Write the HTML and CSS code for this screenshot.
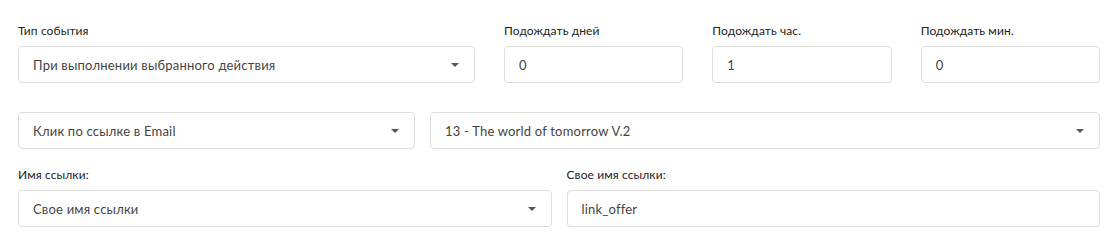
FILE: index.html
```html
<!DOCTYPE html>
<html lang="ru">
<head>
  <meta charset="UTF-8" />
  <title>Тип события</title>
  <link rel="stylesheet" href="styles.css">
</head>
<body>
  <div class="form">
    <div class="row row-top">
      <div class="field">
        <label>Тип события</label>
        <div class="select">
          <span>При выполнении выбранного действия</span>
          <svg class="caret" width="8" height="4" viewBox="0 0 8 4"><path d="M0 0h8L4 4z"/></svg>
        </div>
      </div>
      <div class="field">
        <label>Подождать дней</label>
        <input class="input" type="text" value="0" />
      </div>
      <div class="field">
        <label>Подождать час.</label>
        <input class="input" type="text" value="1" />
      </div>
      <div class="field">
        <label>Подождать мин.</label>
        <input class="input" type="text" value="0" />
      </div>
    </div>

    <div class="row row-action">
      <div class="select">
        <span>Клик по ссылке в Email</span>
        <svg class="caret" width="8" height="4" viewBox="0 0 8 4"><path d="M0 0h8L4 4z"/></svg>
      </div>
      <div class="select">
        <span>13 - The world of tomorrow V.2</span>
        <svg class="caret" width="8" height="4" viewBox="0 0 8 4"><path d="M0 0h8L4 4z"/></svg>
      </div>
    </div>

    <div class="row row-link">
      <div class="field">
        <label>Имя ссылки:</label>
        <div class="select">
          <span>Свое имя ссылки</span>
          <svg class="caret" width="8" height="4" viewBox="0 0 8 4"><path d="M0 0h8L4 4z"/></svg>
        </div>
      </div>
      <div class="field">
        <label>Свое имя ссылки:</label>
        <input class="input" type="text" value="link_offer" />
      </div>
    </div>
  </div>
</body>
</html>
```

FILE: styles.css
```css
* {
  box-sizing: border-box;
  margin: 0;
  padding: 0;
}

body {
  font-family: 'Lato', 'Noto Sans', sans-serif;
  background: #ffffff;
  color: #444444;
}

.form {
  padding: 22px 19px 0 18px;
}

.row {
  display: grid;
}

.row-top {
  grid-template-columns: 457px 1fr 1fr 1fr;
  column-gap: 29px;
}

.row-action {
  grid-template-columns: 397px 1fr;
  column-gap: 15px;
  margin-top: 29px;
}

.row-link {
  grid-template-columns: 1fr 1fr;
  column-gap: 15px;
  margin-top: 17px;
}

.field label {
  display: block;
  font-size: 12px;
  line-height: 18px;
  font-weight: 400;
  color: #222222;
  letter-spacing: 0.1px;
  margin-bottom: 6px;
}

.select,
.input {
  display: flex;
  align-items: center;
  width: 100%;
  height: 37px;
  padding: 0 14px;
  border: 1px solid #dedede;
  border-radius: 4px;
  background: #ffffff;
  font-family: inherit;
  font-size: 13px;
  letter-spacing: 0.2px;
  color: #444444;
  outline: none;
}

.select span {
  flex: 1;
}

.caret {
  fill: #555555;
  margin-right: 1px;
}
```
